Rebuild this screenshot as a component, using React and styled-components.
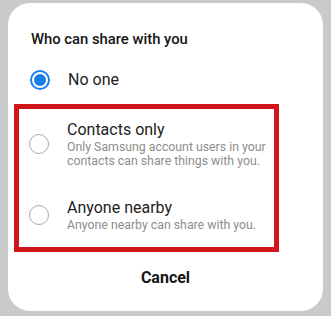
import React from 'react';
import styled, { createGlobalStyle } from 'styled-components';

const GlobalStyle = createGlobalStyle`
  html, body {
    margin: 0;
    padding: 0;
    background: #cacaca;
    font-family: Roboto, "Noto Sans", "Liberation Sans", sans-serif;
  }
`;

const Page = styled.div`
  width: 331px;
  height: 316px;
  padding: 3px 8px 0;
  box-sizing: border-box;
`;

const Card = styled.div`
  width: 315px;
  height: 308px;
  box-sizing: border-box;
  background: #fff;
  border-radius: 22px;
  padding-top: 26px;
  display: flex;
  flex-direction: column;
`;

const Title = styled.div`
  font-size: 14.8px;
  line-height: 20px;
  font-weight: 500;
  color: #151515;
  padding-left: 23px;
`;

const Highlight = styled.div`
  margin: 14px 0 0 6px;
  width: 265px;
  box-sizing: border-box;
  border: 5px solid #d0161b;
  padding: 11px 0 14px 10px;
  display: flex;
  flex-direction: column;
  gap: 30px;
`;

const Option = styled.div`
  display: flex;
  align-items: center;
  gap: 18px;
  padding-left: ${p => p.$inset || 0}px;
  margin-top: ${p => p.$top || 0}px;
`;

const Radio = styled.span`
  flex: none;
  width: 20px;
  height: 20px;
  box-sizing: border-box;
  border-radius: 50%;
  border: ${p => (p.$checked ? '2px solid #1a7de8' : '1px solid #a9a9a9')};
  display: flex;
  align-items: center;
  justify-content: center;
  &::after {
    content: '';
    display: ${p => (p.$checked ? 'block' : 'none')};
    width: 12px;
    height: 12px;
    border-radius: 50%;
    background: #1a7de8;
  }
`;

const Texts = styled.div`
  display: flex;
  flex-direction: column;
`;

const Label = styled.div`
  font-size: 16px;
  line-height: 20px;
  color: #222;
`;

const Sub = styled.div`
  font-size: 12.3px;
  line-height: 13.5px;
  color: #8d8d8d;
  margin-top: 1px;
`;

const Cancel = styled.div`
  margin-top: 16px;
  text-align: center;
  font-size: 16px;
  line-height: 20px;
  font-weight: 700;
  color: #151515;
`;

const options = [
  {
    label: 'Contacts only',
    sub: ['Only Samsung account users in your', 'contacts can share things with you.'],
  },
  {
    label: 'Anyone nearby',
    sub: ['Anyone nearby can share with you.'],
  },
];

export default function App() {
  return (
    <Page>
      <GlobalStyle />
      <Card>
        <Title>Who can share with you</Title>
        <Option $inset={22} $top={21}>
          <Radio $checked />
          <Label>No one</Label>
        </Option>
        <Highlight>
          {options.map(o => (
            <Option key={o.label}>
              <Radio />
              <Texts>
                <Label>{o.label}</Label>
                <Sub>
                  {o.sub.map(line => (
                    <div key={line}>{line}</div>
                  ))}
                </Sub>
              </Texts>
            </Option>
          ))}
        </Highlight>
        <Cancel>Cancel</Cancel>
      </Card>
    </Page>
  );
}
